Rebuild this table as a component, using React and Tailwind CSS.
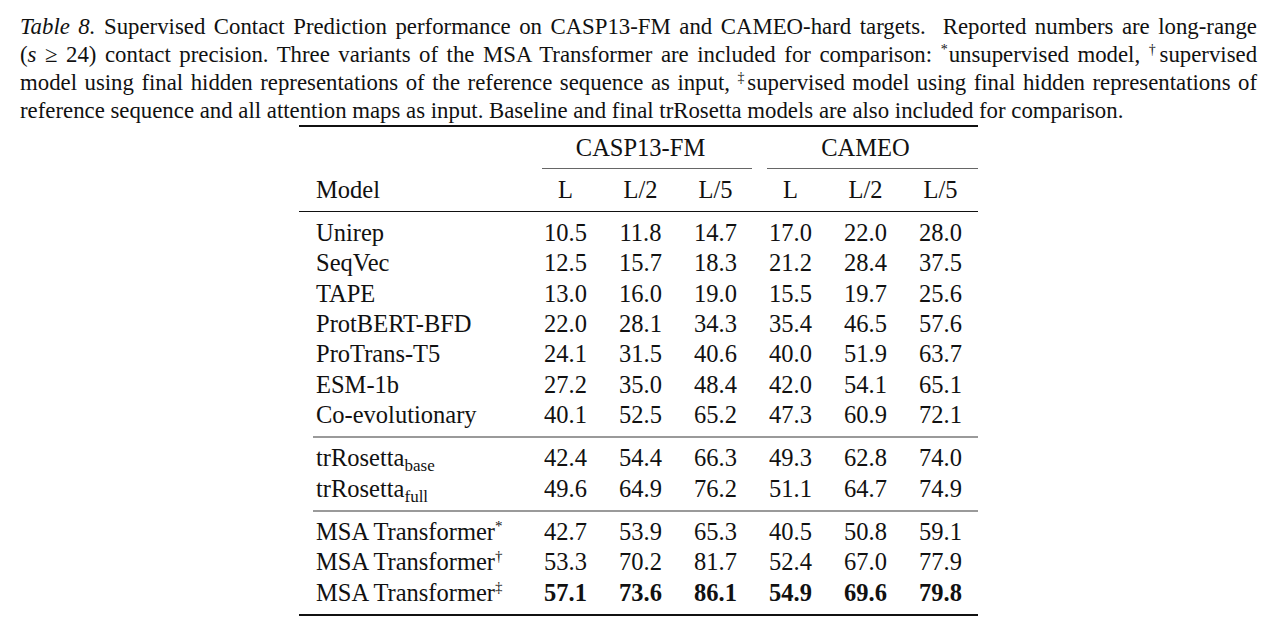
import React from 'react'

const groupA = [
  ['Unirep', '10.5', '11.8', '14.7', '17.0', '22.0', '28.0'],
  ['SeqVec', '12.5', '15.7', '18.3', '21.2', '28.4', '37.5'],
  ['TAPE', '13.0', '16.0', '19.0', '15.5', '19.7', '25.6'],
  ['ProtBERT-BFD', '22.0', '28.1', '34.3', '35.4', '46.5', '57.6'],
  ['ProTrans-T5', '24.1', '31.5', '40.6', '40.0', '51.9', '63.7'],
  ['ESM-1b', '27.2', '35.0', '48.4', '42.0', '54.1', '65.1'],
  ['Co-evolutionary', '40.1', '52.5', '65.2', '47.3', '60.9', '72.1'],
]

const groupB = [
  [<>trRosetta<span className="text-[17px] leading-[0] align-[-5px]">base</span></>, '42.4', '54.4', '66.3', '49.3', '62.8', '74.0'],
  [<>trRosetta<span className="text-[17px] leading-[0] align-[-5px]">full</span></>, '49.6', '64.9', '76.2', '51.1', '64.7', '74.9'],
]

const groupC = [
  [<>MSA Transformer<span className="text-[15px] leading-[0] align-[9px]">*</span></>, '42.7', '53.9', '65.3', '40.5', '50.8', '59.1'],
  [<>MSA Transformer<span className="text-[15px] leading-[0] align-[9px]">†</span></>, '53.3', '70.2', '81.7', '52.4', '67.0', '77.9'],
  [<>MSA Transformer<span className="text-[15px] leading-[0] align-[9px]">‡</span></>, '57.1', '73.6', '86.1', '54.9', '69.6', '79.8', true],
]

function Row({ row }) {
  const bold = row[7] === true
  return (
    <div className="grid grid-cols-[229px_repeat(6,75px)] h-[30.3px] leading-[30.3px]">
      <div className="pl-[17px] whitespace-nowrap">{row[0]}</div>
      {row.slice(1, 7).map((v, i) => (
        <div key={i} className={'text-center' + (bold ? ' font-bold' : '')}>{v}</div>
      ))}
    </div>
  )
}

function Sup({ children }) {
  return <span className="text-[14px] leading-[0] align-[8px] mr-[1px]">{children}</span>
}

export default function App() {
  return (
    <div className="bg-white min-h-[638px] w-[1280px] text-[#111] font-['Liberation_Serif',serif]">
      <div className="ml-[20px] w-[1237px] pt-[13px]">
        <div className="font-['Liberation_Serif',serif] text-[22.8px] leading-[28px]">
          <div className="h-[28px] text-justify [text-align-last:justify]">
            <i>Table 8.</i> Supervised Contact Prediction performance on CASP13-FM and CAMEO-hard targets.&nbsp; Reported numbers are long-range
          </div>
          <div className="h-[28px] text-justify [text-align-last:justify]">
            (<i>s</i> ≥ 24) contact precision. Three variants of the MSA Transformer are included for comparison: <Sup>*</Sup>unsupervised model, <Sup>†</Sup>supervised
          </div>
          <div className="h-[28px] text-justify [text-align-last:justify]">
            model using final hidden representations of the reference sequence as input, <Sup>‡</Sup>supervised model using final hidden representations of
          </div>
          <div className="h-[28px]">
            reference sequence and all attention maps as input. Baseline and final trRosetta models are also included for comparison.
          </div>
        </div>

        <div className="mx-auto w-[679px] text-[24.5px]">
          <div className="h-[2px] bg-[#111]" />

          <div className="py-[5.6px]">
            <div className="grid grid-cols-[229px_repeat(6,75px)] h-[30.3px] leading-[30.3px]">
              <div />
              <div className="col-span-3 text-center">CASP13-FM</div>
              <div className="col-span-3 text-center">CAMEO</div>
            </div>
          </div>
          <div className="grid grid-cols-[229px_repeat(6,75px)]">
            <div />
            <div className="col-span-3 ml-[14px] mr-[1px] h-[1px] bg-[#666]" />
            <div className="col-span-3 ml-[13.5px] h-[1px] bg-[#666]" />
          </div>
          <div className="py-[5.6px]">
            <Row row={['Model', 'L', 'L/2', 'L/5', 'L', 'L/2', 'L/5']} />
          </div>
          <div className="h-[1.5px] bg-[#111]" />

          <div className="py-[5.6px]">
            {groupA.map((r, i) => <Row key={i} row={r} />)}
          </div>
          <div className="ml-[13.5px] h-[2px] bg-[#9a9a9a]" />

          <div className="py-[5.6px]">
            {groupB.map((r, i) => <Row key={i} row={r} />)}
          </div>
          <div className="ml-[13.5px] h-[2px] bg-[#9a9a9a]" />

          <div className="py-[5.6px]">
            {groupC.map((r, i) => <Row key={i} row={r} />)}
          </div>
          <div className="h-[2px] bg-[#111]" />
        </div>
      </div>
    </div>
  )
}
